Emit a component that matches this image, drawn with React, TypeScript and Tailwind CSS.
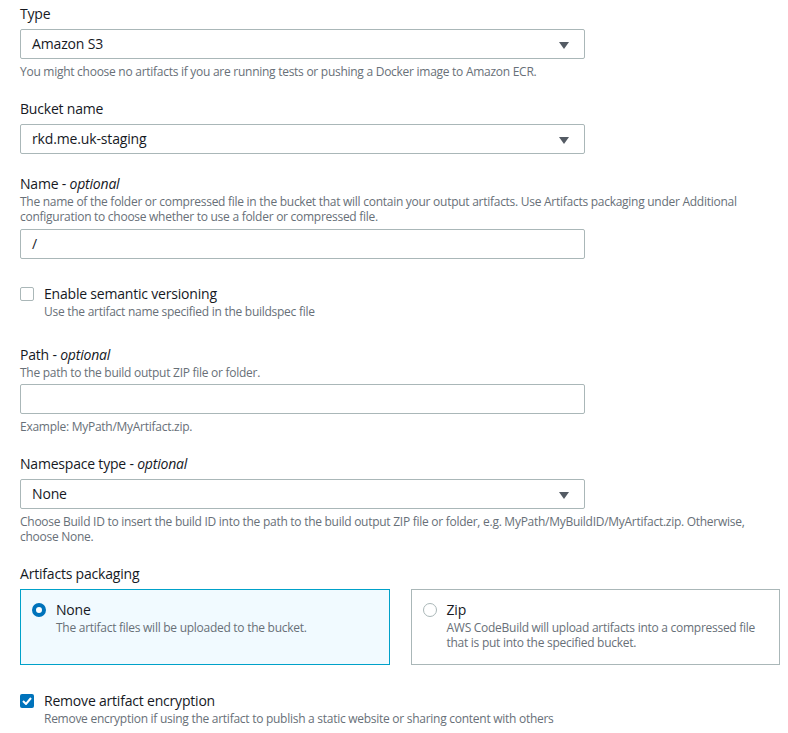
import React from 'react';

const font = { fontFamily: '"Open Sans", "Liberation Sans", sans-serif' };

const Caret = () => (
  <svg width="10" height="7" viewBox="0 0 10 7" className="absolute right-[15px] top-[12px]">
    <path d="M0 0 H10 L5 7 Z" fill="#545b64" />
  </svg>
);

const Select: React.FC<{ value: string }> = ({ value }) => (
  <div className="relative w-[565px] h-[30px] border border-[#aab7b8] rounded-[2px] bg-white pl-[11px] text-[14px] leading-[28px] tracking-[-0.15px] text-[#16191f]">
    {value}
    <Caret />
  </div>
);

const Input: React.FC<{ value?: string }> = ({ value }) => (
  <div className="w-[565px] h-[30px] border border-[#aab7b8] rounded-[2px] bg-white pl-[11px] text-[14px] leading-[28px] text-[#16191f]">
    {value}
  </div>
);

const Label: React.FC<{ text: string; optional?: boolean }> = ({ text, optional }) => (
  <div className="text-[14px] leading-[20px] tracking-[-0.2px] text-[#16191f]">
    {text}
    {optional && (
      <>
        {' - '}
        <i>optional</i>
      </>
    )}
  </div>
);

const Help: React.FC<{ children: React.ReactNode }> = ({ children }) => (
  <div className="text-[12px] leading-[15px] tracking-[-0.27px] text-[#687078]">{children}</div>
);

const Check: React.FC<{ checked?: boolean }> = ({ checked }) =>
  checked ? (
    <div className="w-[14px] h-[14px] rounded-[2px] bg-[#0073bb] flex items-center justify-center shrink-0">
      <svg width="10" height="8" viewBox="0 0 10 8">
        <path d="M1 4 L4 7 L9 1" stroke="white" strokeWidth="2" fill="none" />
      </svg>
    </div>
  ) : (
    <div className="w-[14px] h-[14px] rounded-[2px] border border-[#aab7b8] bg-white shrink-0" />
  );

const Radio: React.FC<{ checked?: boolean }> = ({ checked }) =>
  checked ? (
    <div className="w-[14px] h-[14px] rounded-full border-[4px] border-[#0073bb] bg-white shrink-0" />
  ) : (
    <div className="w-[14px] h-[14px] rounded-full border border-[#aab7b8] bg-white shrink-0" />
  );

export default function App() {
  return (
    <div className="bg-white w-[788px] h-[733px] px-5 pt-[4px]" style={font}>
      <Label text="Type" />
      <div className="mt-[5px]">
        <Select value="Amazon S3" />
      </div>
      <div className="mt-[5px]">
        <Help>You might choose no artifacts if you are running tests or pushing a Docker image to Amazon ECR.</Help>
      </div>

      <div className="mt-[20px]">
        <Label text="Bucket name" />
      </div>
      <div className="mt-[5px]">
        <Select value="rkd.me.uk-staging" />
      </div>

      <div className="mt-[20px]">
        <Label text="Name" optional />
      </div>
      <Help>
        The name of the folder or compressed file in the bucket that will contain your output artifacts. Use Artifacts packaging under Additional configuration to choose whether to use a folder or compressed file.
      </Help>
      <div className="mt-[5px]">
        <Input value="/" />
      </div>

      <div className="mt-[25px] flex gap-[10px]">
        <div className="pt-[3px]">
          <Check />
        </div>
        <div>
          <div className="text-[14px] leading-[20px] tracking-[-0.2px] text-[#16191f]">Enable semantic versioning</div>
          <Help>Use the artifact name specified in the buildspec file</Help>
        </div>
      </div>

      <div className="mt-[26px]">
        <Label text="Path" optional />
      </div>
      <Help>The path to the build output ZIP file or folder.</Help>
      <div className="mt-[4px]">
        <Input />
      </div>
      <div className="mt-[5px]">
        <Help>Example: MyPath/MyArtifact.zip.</Help>
      </div>

      <div className="mt-[20px]">
        <Label text="Namespace type" optional />
      </div>
      <div className="mt-[5px]">
        <Select value="None" />
      </div>
      <div className="mt-[5px]">
        <Help>
          Choose Build ID to insert the build ID into the path to the build output ZIP file or folder, e.g. MyPath/MyBuildID/MyArtifact.zip. Otherwise, choose None.
        </Help>
      </div>

      <div className="mt-[20px]">
        <Label text="Artifacts packaging" />
      </div>
      <div className="mt-[5px] grid grid-cols-2 gap-[21px] w-[760px]">
        <div className="h-[76px] border border-[#00a1c9] bg-[#f1faff] px-[11px] pt-[10px] flex gap-[10px]">
          <div className="pt-[3px]">
            <Radio checked />
          </div>
          <div>
            <div className="text-[14px] leading-[20px] tracking-[-0.2px] text-[#16191f]">None</div>
            <Help>The artifact files will be uploaded to the bucket.</Help>
          </div>
        </div>
        <div className="h-[76px] border border-[#aab7b8] bg-white px-[11px] pt-[10px] flex gap-[10px]">
          <div className="pt-[3px]">
            <Radio />
          </div>
          <div className="min-w-0">
            <div className="text-[14px] leading-[20px] tracking-[-0.2px] text-[#16191f]">Zip</div>
            <Help>
              AWS CodeBuild will upload artifacts into a compressed file that is put into the specified bucket.
            </Help>
          </div>
        </div>
      </div>

      <div className="mt-[26px] flex gap-[10px]">
        <div className="pt-[3px]">
          <Check checked />
        </div>
        <div>
          <div className="text-[14px] leading-[20px] tracking-[-0.2px] text-[#16191f]">Remove artifact encryption</div>
          <Help>Remove encryption if using the artifact to publish a static website or sharing content with others</Help>
        </div>
      </div>
    </div>
  );
}
